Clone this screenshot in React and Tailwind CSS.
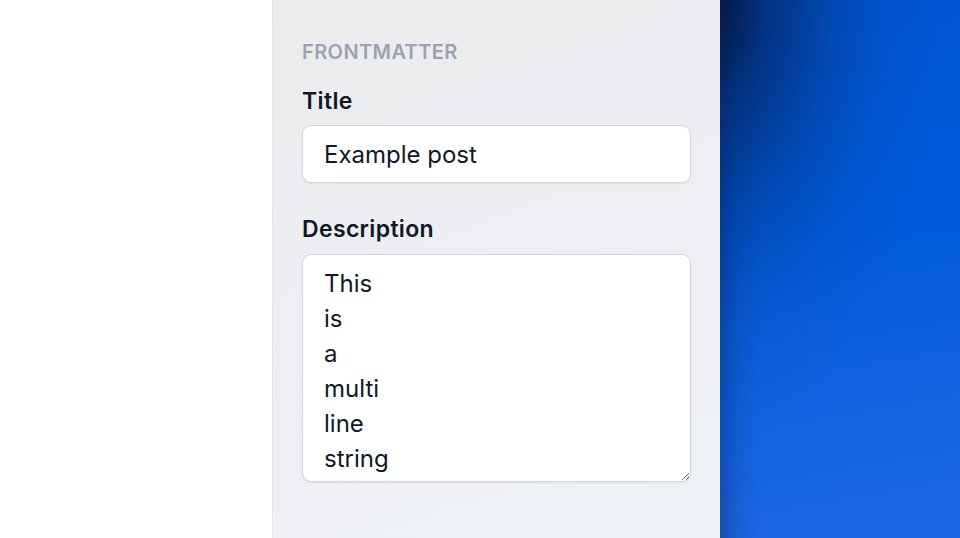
import React from "react";

export default function App() {
  return (
    <div
      className="flex h-[538px] w-[960px] overflow-hidden bg-white"
      style={{ fontFamily: "Inter, 'Noto Sans', sans-serif" }}
    >
      <div className="w-[272px] shrink-0 bg-white" />
      <div className="flex w-[448px] shrink-0 flex-col border-l border-[#e3e4e8] bg-[linear-gradient(160deg,#ececee_0%,#edeff3_55%,#eef1f6_100%)] px-[29px] pt-[38px]">
        <div className="text-[20px] font-semibold leading-[28px] tracking-[0.02em] text-[#9ca3af]">
          FRONTMATTER
        </div>
        <label className="mt-[19px] text-[23px] font-semibold leading-[32px] tracking-[0.015em] text-[#111827]">
          Title
        </label>
        <input
          readOnly
          value="Example post"
          className="mt-[8px] h-[58px] w-full rounded-[9px] border border-[#d4d6db] bg-white px-[21px] text-[24px] text-[#111827] shadow-[0_1px_2px_rgba(0,0,0,0.06)] outline-none"
        />
        <label className="mt-[30px] text-[23px] font-semibold leading-[32px] tracking-[0.015em] text-[#111827]">
          Description
        </label>
        <textarea
          readOnly
          value={"This\nis\na\nmulti\nline\nstring"}
          className="mt-[9px] h-[228px] w-full resize-y rounded-[9px] border border-[#d4d6db] bg-white px-[21px] pt-[11px] text-[24px] leading-[35px] text-[#111827] shadow-[0_1px_2px_rgba(0,0,0,0.06)] outline-none"
        />
      </div>
      <div className="flex-1 bg-[linear-gradient(90deg,rgba(5,20,60,0.28)_0px,rgba(5,20,60,0.08)_18px,rgba(5,20,60,0)_40px),radial-gradient(ellipse_220px_440px_at_0_0,rgba(5,24,67,0.95)_0%,rgba(5,24,67,0.55)_22%,rgba(5,24,67,0.22)_50%,rgba(5,24,67,0.06)_75%,rgba(5,24,67,0)_100%),linear-gradient(170deg,#0054d0_0%,#005ada_40%,#1f68e4_100%)]" />
    </div>
  );
}
